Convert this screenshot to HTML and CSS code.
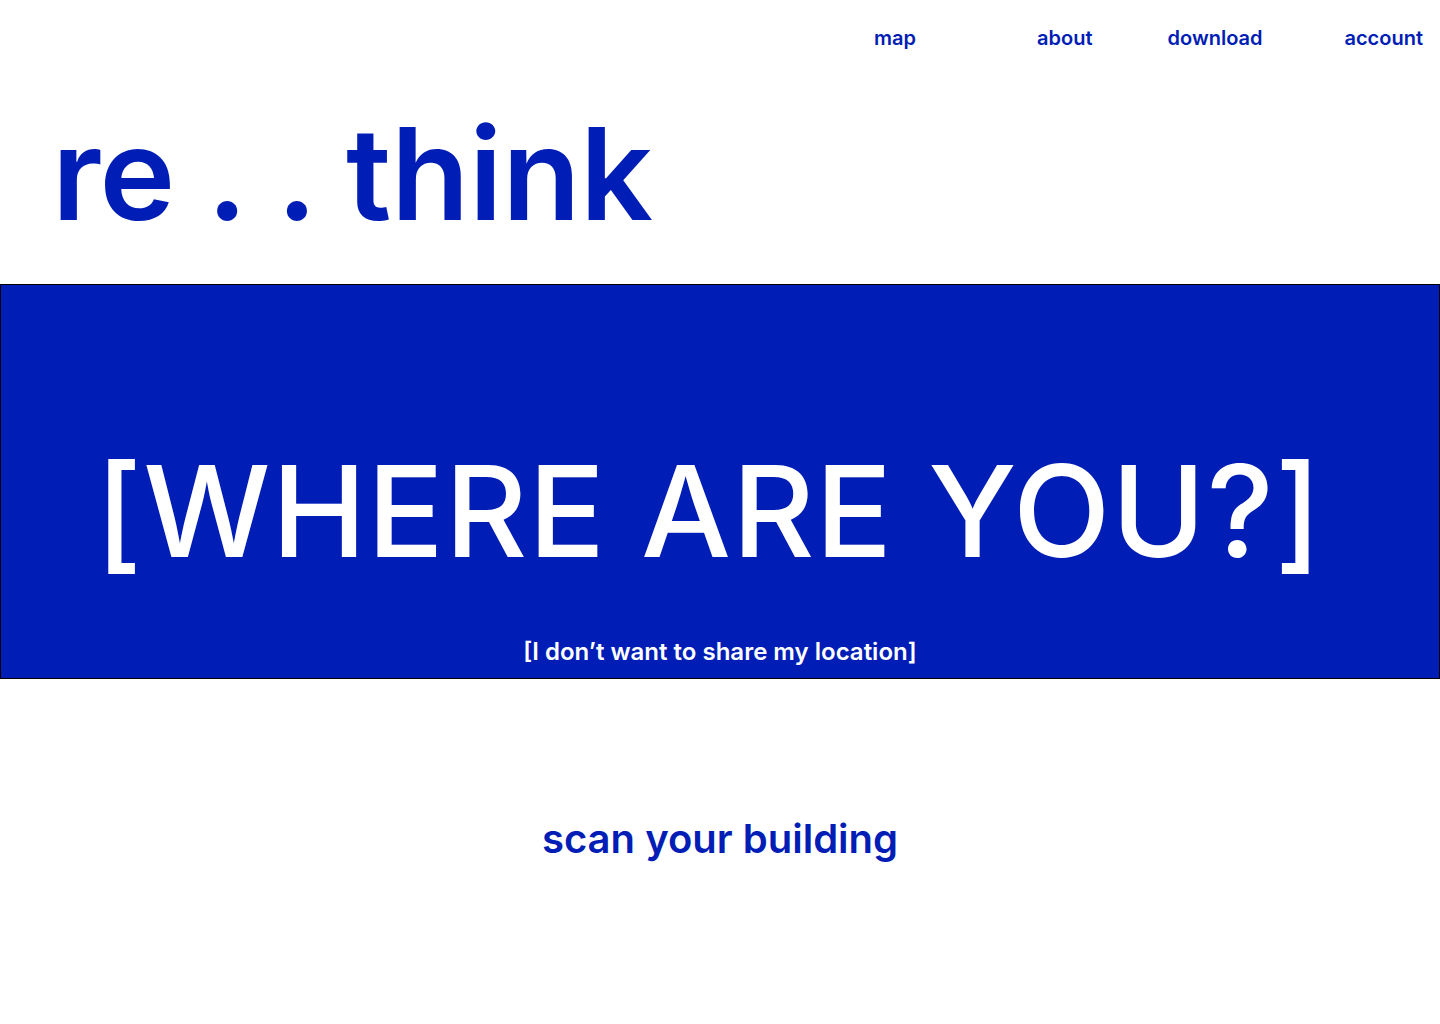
FILE: index.html
```html
<!DOCTYPE html>
<html lang="en">
<head>
<meta charset="utf-8">
<title>re..think</title>
<link rel="stylesheet" href="styles.css">
</head>
<body>
<header class="topbar">
  <nav class="nav">
    <a class="nav-link nav-map" href="#">map</a>
    <a class="nav-link nav-about" href="#">about</a>
    <a class="nav-link nav-download" href="#">download</a>
    <a class="nav-link nav-account" href="#">account</a>
  </nav>
</header>
<h1 class="logo">re . . think</h1>
<section class="hero">
  <h2 class="hero-title">[WHERE ARE YOU?]</h2>
  <a class="hero-skip" href="#">[I don’t want to share my location]</a>
</section>
<div class="scan">
  <a class="scan-link" href="#">scan your building</a>
</div>
</body>
</html>
```
FILE: styles.css
```css
html, body {
  margin: 0;
  padding: 0;
  background: #ffffff;
}
body {
  font-family: Inter, "Noto Sans", sans-serif;
  color: #001db5;
  width: 1440px;
}
a {
  color: inherit;
  text-decoration: none;
}
.topbar {
  height: 76px;
  display: flex;
  justify-content: flex-end;
}
.nav {
  display: flex;
  align-items: flex-start;
  padding-top: 25px;
  padding-right: 17px;
}
.nav-link {
  font-size: 20px;
  font-weight: 600;
  line-height: 26px;
}
.nav-about { margin-left: 121px; }
.nav-download { margin-left: 75px; }
.nav-account { margin-left: 82px; }
.logo {
  margin: 0;
  padding-left: 52px;
  font-size: 128px;
  font-weight: 600;
  line-height: 196px;
  letter-spacing: -0.4px;
  height: 208px;
}
.hero {
  box-sizing: border-box;
  height: 395px;
  background: #001db5;
  border: 1px solid #000;
  display: flex;
  flex-direction: column;
  align-items: center;
  color: #ffffff;
}
.hero-title {
  margin: 0;
  margin-top: 151px;
  padding-right: 22px;
  font-size: 127px;
  font-weight: 500;
  line-height: 150px;
  letter-spacing: 1.1px;
}
.hero-skip {
  margin-top: 51px;
  font-size: 24px;
  font-weight: 600;
  line-height: 30px;
}
.scan {
  display: flex;
  justify-content: center;
  padding-top: 137px;
}
.scan-link {
  font-size: 40px;
  font-weight: 600;
  line-height: 46px;
}
```
